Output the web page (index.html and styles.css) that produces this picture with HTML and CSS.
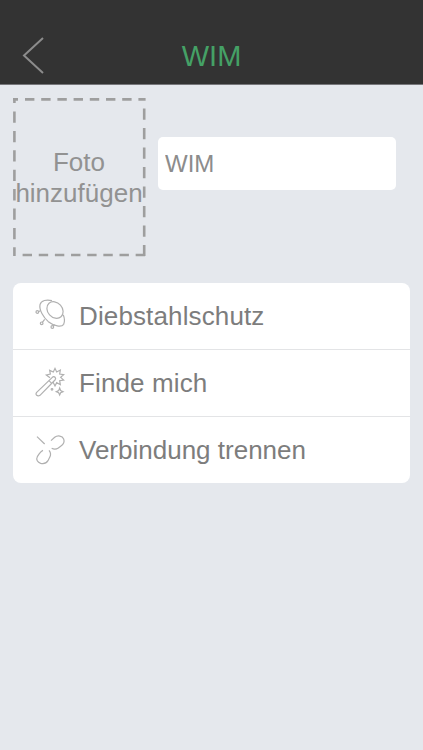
FILE: index.html
```html
<!DOCTYPE html>
<html lang="de">
<head>
  <meta charset="UTF-8">
  <meta name="viewport" content="width=device-width, initial-scale=1.0">
  <title>WIM</title>
  <link rel="stylesheet" href="styles.css">
</head>
<body>
  <header class="navbar">
    <button class="back" aria-label="Zurück">
      <svg width="24" height="38" viewBox="0 0 24 38"><path d="M22 1 L3 18.5 L22 36"/></svg>
    </button>
    <h1>WIM</h1>
    <span></span>
  </header>

  <main>
    <div class="profile">
      <div class="photo">
        <svg class="frame" width="133" height="159" viewBox="0 0 133 159">
          <path d="M0 1.4 H5 M12 1.4 H132.6" stroke-dasharray="9.4 6.8"/>
          <path d="M1.4 0 V5 M1.4 13.5 V158" stroke-dasharray="11.3 8.1"/>
          <path d="M131.2 10.5 V158" stroke-dasharray="11.3 8.2"/>
          <path d="M9.6 157 H132.6" stroke-dasharray="9.4 6.75"/>
        </svg>
        <span>Foto<br>hinzufügen</span>
      </div>
      <input class="name" type="text" value="WIM">
    </div>

    <ul class="menu">
      <li>
        <svg class="icon" viewBox="0 0 108 108">
          <ellipse cx="69" cy="36" rx="22" ry="27" transform="rotate(-42 69 36)"/>
          <path d="M60 8 C44 4 27 7 24 20 C21 36 34 58 49 71 C66 84 88 89 95 79 C98 72 98 61 94 51"/>
          <path d="M25 38 L19 41 M38 64 L31 73 M68 80 L63 85"/>
          <circle cx="16" cy="42" r="4"/>
          <circle cx="29" cy="76" r="4"/>
          <circle cx="61" cy="87" r="4"/>
        </svg>
        <span class="theft">Diebstahlschutz</span>
      </li>
      <li>
        <svg class="icon" viewBox="0 0 108 108">
          <path d="M54 38 L43 30 L55 27 L53 16 L64 21 L69 10 L74 21 L85 15 L83 27 L95 29 L86 37 L95 45 L83 47 L85 59 L74 53 L69 63 L63 51"/>
          <path class="handle" d="M14 82 L61 37 C67 32 74 39 69 45 L24 91 C17 96 8 89 14 82 Z"/>
          <path d="M51 47 L59 55"/>
          <circle cx="60" cy="73" r="2.5"/>
          <path d="M83 69 L86 77 L93 80 L86 83 L83 90 L80 83 L73 80 L80 77 Z"/>
        </svg>
        <span class="find">Finde mich</span>
      </li>
      <li>
        <svg class="icon" viewBox="0 0 108 108">
          <path d="M15 14 L38 36"/>
          <path d="M57 26 L68 16 C77 9 91 11 95 21 C99 31 93 38 86 43 L79 48 C73 52 65 52 59 49"/>
          <path d="M33 55 C28 57 25 61 22 65 L16 74 C11 83 17 91 26 94 C34 96 43 94 48 86 L53 76 C57 69 56 61 51 55"/>
        </svg>
        <span class="disconnect">Verbindung trennen</span>
      </li>
    </ul>
  </main>
</body>
</html>
```

FILE: styles.css
```css
* {
  box-sizing: border-box;
}
body {
  margin: 0;
  min-height: 100vh;
  background: #e5e8ed;
  color: #7d7d7d;
  font-family: "Liberation Sans", Arial, sans-serif;
}
svg {
  display: block;
  fill: none;
}
.navbar {
  display: grid;
  grid-template-columns: 90px 1fr 90px;
  align-items: center;
  height: 85px;
  padding-top: 27px;
  background: #333333;
  border-bottom: 1px solid #77777b;
}
.back {
  width: 46px;
  padding: 0 0 0 21px;
  border: none;
  background: none;
  cursor: pointer;
}
.back svg {
  stroke: #8c8c8c;
  stroke-width: 2;
}
h1 {
  margin: 0;
  padding-top: 2px;
  font-size: 29px;
  line-height: 35px;
  font-weight: normal;
  text-align: center;
  color: #45a166;
}
main {
  padding: 13px;
}
.profile {
  display: flex;
  gap: 13px;
}
.photo {
  position: relative;
  display: flex;
  align-items: center;
  justify-content: center;
  width: 132px;
  height: 159px;
  font-size: 26px;
  line-height: 31px;
  text-align: center;
  color: #929292;
}
.frame {
  position: absolute;
  top: 0;
  left: 0;
  stroke: #9e9e9e;
  stroke-width: 2.6;
}
.name {
  width: 238px;
  height: 53px;
  margin-top: 39px;
  padding: 1px 7px 0;
  border: none;
  border-radius: 5px;
  background: white;
  font-family: inherit;
  font-size: 24px;
  color: #8c8c8c;
}
.menu {
  margin: 26px 0 0;
  padding: 0;
  list-style: none;
  background: white;
  border-radius: 8px;
}
.menu li {
  display: flex;
  align-items: center;
  gap: 11px;
  height: 66px;
  padding-left: 19px;
  font-size: 26px;
}
.menu li + li {
  height: 67px;
  border-top: 1px solid #e3e4e6;
}
.theft,
.find {
  letter-spacing: 0.13px;
}
.icon {
  width: 36px;
  height: 36px;
  stroke: #b0b0b0;
  stroke-width: 3.6;
}
.handle {
  fill: white;
}
```
